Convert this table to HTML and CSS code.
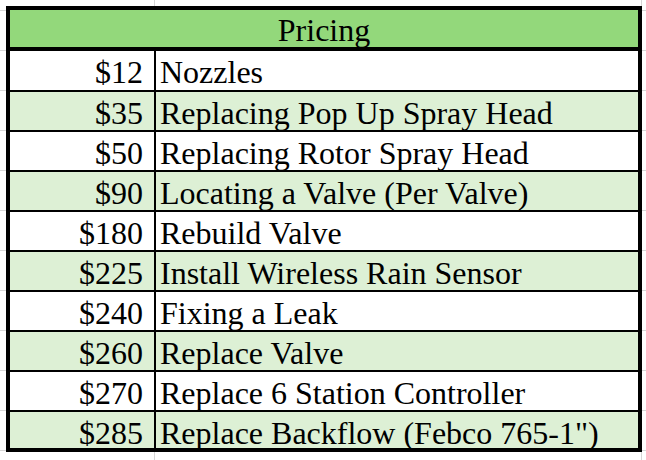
FILE: index.html
```html
<!DOCTYPE html>
<html lang="en">
<head>
<meta charset="utf-8">
<title>Pricing</title>
<link rel="stylesheet" href="styles.css">
</head>
<body>
<div class="sheet">
  <div class="table">
    <div class="header">Pricing</div>
    <div class="row first"><div class="price">$12</div><div class="desc">Nozzles</div></div>
    <div class="row alt"><div class="price">$35</div><div class="desc">Replacing Pop Up Spray Head</div></div>
    <div class="row"><div class="price">$50</div><div class="desc">Replacing Rotor Spray Head</div></div>
    <div class="row alt"><div class="price">$90</div><div class="desc">Locating a Valve (Per Valve)</div></div>
    <div class="row"><div class="price">$180</div><div class="desc">Rebuild Valve</div></div>
    <div class="row alt"><div class="price">$225</div><div class="desc">Install Wireless Rain Sensor</div></div>
    <div class="row"><div class="price">$240</div><div class="desc">Fixing a Leak</div></div>
    <div class="row alt"><div class="price">$260</div><div class="desc">Replace Valve</div></div>
    <div class="row"><div class="price">$270</div><div class="desc">Replace 6 Station Controller</div></div>
    <div class="row alt last"><div class="price">$285</div><div class="desc">Replace Backflow (Febco 765-1")</div></div>
  </div>
</div>
</body>
</html>
```
FILE: styles.css
```css
html, body {
  margin: 0;
  padding: 0;
}
body {
  width: 646px;
  height: 460px;
  overflow: hidden;
  background-color: #ffffff;
  background-image:
    linear-gradient(to right, transparent 154px, #d6d6d6 154px, #d6d6d6 155px, transparent 155px),
    linear-gradient(to right, transparent 641px, #d6d6d6 641px, #d6d6d6 642px, transparent 642px),
    repeating-linear-gradient(to bottom, transparent 0, transparent 10px, #d6d6d6 10px, #d6d6d6 11px, transparent 11px, transparent 40px);
  font-family: "Liberation Serif", "Times New Roman", serif;
  color: #000;
}
.sheet {
  padding: 6px 0 0 6px;
}
.table {
  width: 636px;
  box-sizing: border-box;
  border: 4px solid #000;
  display: flex;
  flex-direction: column;
}
.header {
  height: 37px;
  box-sizing: border-box;
  padding-top: 3px;
  line-height: 34px;
  border-bottom: 4px solid #000;
  box-sizing: content-box;
  height: 34px;
  background: #93d87b;
  text-align: center;
  font-size: 32px;
}
.row {
  display: grid;
  grid-template-columns: 146px 1fr;
  height: 38px;
  border-bottom: 2px solid #000;
  background: #fff;
  font-size: 32px;
}
.row.first {
  height: 39px;
}
.row.alt {
  background: #ddf0d5;
}
.row.last {
  height: 36px;
  border-bottom: none;
}
.price,
.desc {
  padding-top: 4px;
  line-height: 34px;
  white-space: nowrap;
}
.price {
  border-right: 2px solid #000;
  text-align: right;
  padding-right: 11px;
}
.desc {
  padding-left: 4px;
}
```
